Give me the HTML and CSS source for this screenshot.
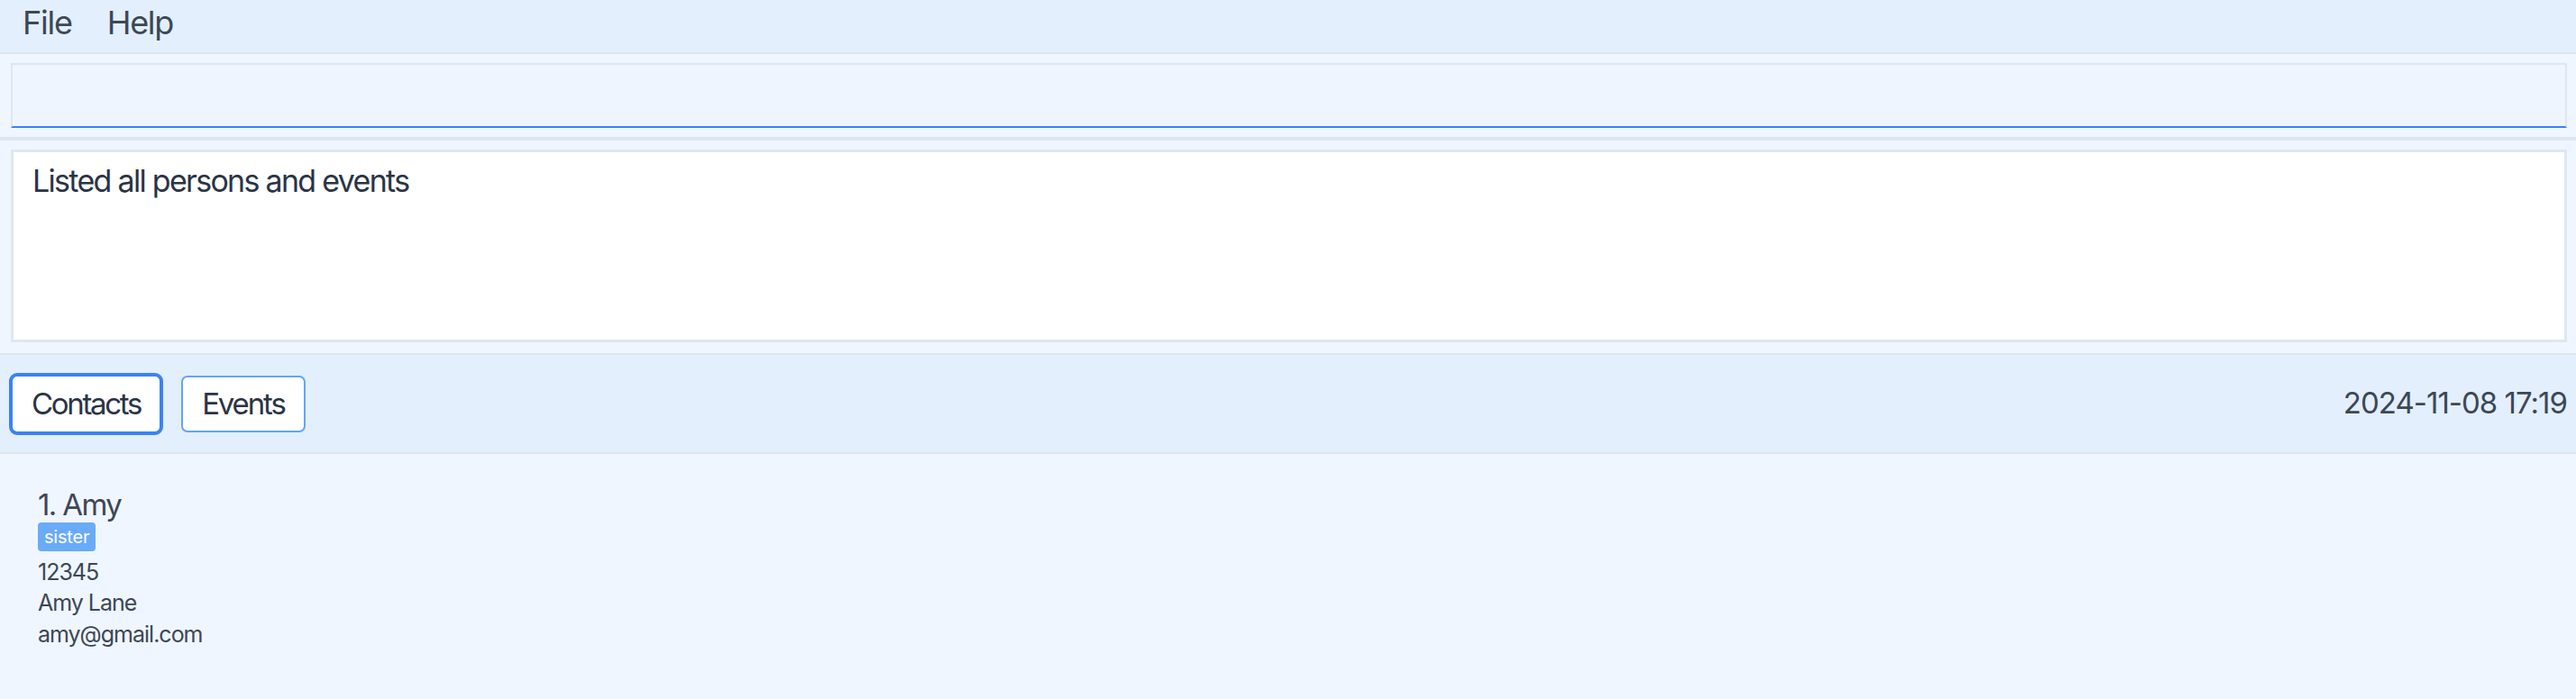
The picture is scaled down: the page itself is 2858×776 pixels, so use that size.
FILE: index.html
```html
<!DOCTYPE html>
<html lang="en">
<head>
<meta charset="utf-8">
<title>Address Book</title>
<link rel="stylesheet" href="styles.css">
</head>
<body>
<div class="app">
  <nav class="menubar">
    <span class="menu-item">File</span>
    <span class="menu-item">Help</span>
  </nav>
  <section class="command">
    <input class="command-input" type="text" value="">
  </section>
  <section class="result">
    <div class="result-box">Listed all persons and events</div>
  </section>
  <div class="tabbar">
    <div class="tabs">
      <button class="tab tab-active">Contacts</button>
      <button class="tab">Events</button>
    </div>
    <span class="clock">2024-11-08 17:19</span>
  </div>
  <main class="list">
    <article class="card">
      <div class="card-name">1. Amy</div>
      <div class="tags"><span class="tag">sister</span></div>
      <div class="card-line">12345</div>
      <div class="card-line">Amy Lane</div>
      <div class="card-line">amy@gmail.com</div>
    </article>
  </main>
</div>
</body>
</html>
```
FILE: styles.css
```css
* { box-sizing: border-box; }
html, body { margin: 0; padding: 0; }
body {
  font-family: Inter, "Noto Sans", sans-serif;
  background: #eff6ff;
  color: #3d4756;
}
.app {
  height: 776px;
  display: flex;
  flex-direction: column;
  overflow: hidden;
}
.menubar {
  height: 60px;
  flex: none;
  background: #e3effc;
  border-bottom: 2px solid #dde6ef;
  display: flex;
  align-items: flex-start;
  gap: 39px;
  padding: 4px 0 0 25px;
}
.menu-item {
  font-size: 36px;
  line-height: 1.21;
  letter-spacing: -0.035em;
  color: #3d4756;
}
.command {
  flex: none;
  padding: 10px 10px 10px 12px;
  border-bottom: 4px solid #dde6ef;
}
.command-input {
  display: block;
  width: 100%;
  height: 72px;
  margin: 0;
  background: #eef5fe;
  border: 2px solid #dde6ef;
  border-bottom-color: #3b82f6;
  outline: none;
  font: inherit;
}
.result {
  flex: none;
  padding: 10px 10px 12px 12px;
  border-bottom: 2px solid #dde6ef;
}
.result-box {
  height: 214px;
  background: #ffffff;
  border: 3px solid #dfe7f0;
  padding: 11px 21px;
  font-size: 34px;
  line-height: 1.21;
  letter-spacing: -0.05em;
  color: #2a3446;
}
.tabbar {
  flex: none;
  height: 110px;
  background: #e3effc;
  border-bottom: 2px solid #dde6ef;
  display: flex;
  align-items: center;
  justify-content: space-between;
  padding: 0 10px;
}
.tabs {
  display: flex;
  align-items: center;
  gap: 20px;
}
.tab {
  display: flex;
  align-items: center;
  justify-content: center;
  height: 63px;
  padding: 0 21px;
  background: #ffffff;
  border: 2px solid #60a5fa;
  border-radius: 7px;
  font-family: inherit;
  font-size: 33px;
  line-height: 1;
  letter-spacing: -0.065em;
  color: #2b3445;
}
.tab-active {
  height: 69px;
  border: 4px solid #3b82f6;
  border-radius: 9px;
  letter-spacing: -0.07em;
}
.clock {
  font-size: 33px;
  line-height: 1.21;
  letter-spacing: -0.03em;
  color: #3d4756;
}
.list {
  flex: 1;
  padding: 37px 0 0 42px;
}
.card-name {
  font-size: 33px;
  line-height: 1.21;
  letter-spacing: -0.05em;
  color: #3d4756;
}
.tags {
  display: flex;
  margin-top: -1px;
}
.tag {
  background: #6aabf8;
  color: #ffffff;
  font-size: 20px;
  line-height: 24px;
  letter-spacing: -0.01em;
  padding: 4px 7px;
  border-radius: 4px;
}
.card-line {
  font-size: 25px;
  line-height: 34.5px;
  letter-spacing: -0.04em;
  color: #3d4756;
}
.tags + .card-line { margin-top: 6px; }
```
